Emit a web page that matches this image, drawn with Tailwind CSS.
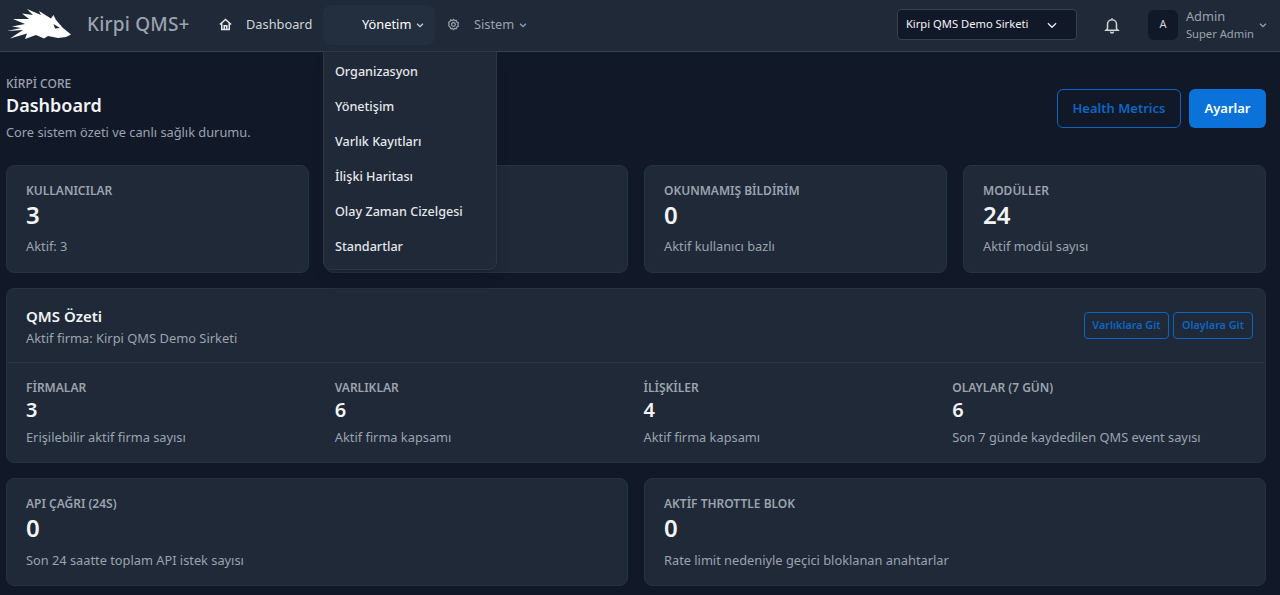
<!DOCTYPE html>
<html lang="tr">
<head>
  <meta charset="UTF-8">
  <meta name="viewport" content="width=device-width, initial-scale=1.0">
  <title>Kirpi QMS+ Dashboard</title>
  <script src="https://cdn.jsdelivr.net/npm/@tailwindcss/browser@4"></script>
</head>
<body class="bg-[#111827] h-[595px] overflow-hidden font-['Noto_Sans',sans-serif] text-[#e5e7eb]">
  <header class="h-[52px] bg-[#1f2937] border-b border-[#374151] flex items-center pl-[6px] pr-[12px]">
    <svg class="w-[66px] h-[32px] shrink-0 mb-[4px]" viewBox="0 0 66 32" fill="#fff">
      <path d="M65 26.500 L57 20 L50 12 L47.500 7 L45 10.500 L33 3 L35 7 L21 1 L27 7 L16 5.500 L23 11 L7 11 L19 16 L6 18.500 L15 20 L1 23 L17 22 L4 30.500 L21 25.500 L19 31 L30 27 L38 30.500 L42 28 L52 30 L60 29 Z"/>
      <path d="M47.500 16 L54 20 L49 20.500 Z" fill="#1f2937"/>
    </svg>
    <span class="ml-[15px] text-[19px] font-medium text-[#9ca3af] tracking-[0.2px] w-[131px] shrink-0 mb-[2px]">Kirpi QMS+</span>
    <nav class="flex items-center text-[12.8px] h-[40px] mb-[2px]">
      <a class="flex items-center text-[#d1d5db] w-[105px]">
        <svg class="w-[15px] h-[15px] mr-[13px]" viewBox="0 0 24 24" fill="none" stroke="#e5e7eb" stroke-width="2.4"><path d="M3 12 12 4l9 8M6 10v10h12V10M10 20v-6h4v6"/></svg>
        Dashboard
      </a>
      <div class="relative">
        <button class="h-[40px] w-[112px] rounded-lg bg-[#232e3e] text-white flex items-center pl-[39px]">
          Yönetim
          <svg class="w-[10px] h-[10px] ml-[4px]" viewBox="0 0 24 24" fill="none" stroke="#d1d5db" stroke-width="3"><path d="m5 9 7 7 7-7"/></svg>
        </button>
        <div class="absolute left-0 top-[46px] z-10 w-[174px] h-[219px] rounded-b-lg bg-[#1f2937] border border-[#2b3647] shadow-lg pt-[3px] pl-[11px] text-[12.6px] font-medium text-[#e5e7eb]">
          <a class="flex items-center h-[35px]">Organizasyon</a>
          <a class="flex items-center h-[35px]">Yönetişim</a>
          <a class="flex items-center h-[35px]">Varlık Kayıtları</a>
          <a class="flex items-center h-[35px]">İlişki Haritası</a>
          <a class="flex items-center h-[35px]">Olay Zaman Cizelgesi</a>
          <a class="flex items-center h-[35px]">Standartlar</a>
        </div>
      </div>
      <a class="flex items-center text-[#9ca3af] ml-[12px]">
        <svg class="w-[13px] h-[13px] mr-[14px]" viewBox="0 0 24 24" fill="none" stroke="#9ca3af" stroke-width="2.2"><circle cx="12" cy="12" r="3.5"/><path d="M12 2.500 14 5l3.200-.6 1 3 2.800 1.600-1 3 1 3-2.800 1.600-1 3-3.200-.6-2 2.500-2-2.500-3.200.6-1-3L3 14l1-3-1-3 2.800-1.600 1-3L10 5z"/></svg>
        Sistem
        <svg class="w-[10px] h-[10px] ml-[4px]" viewBox="0 0 24 24" fill="none" stroke="#9ca3af" stroke-width="3"><path d="m5 9 7 7 7-7"/></svg>
      </a>
    </nav>
    <div class="ml-auto flex items-center mb-[2px]">
      <div class="w-[180px] h-[31px] rounded bg-[#111827] border border-[#374151] flex items-center pl-[8px] text-[11.2px] text-[#f3f4f6]">
        Kirpi QMS Demo Sirketi
        <svg class="w-[14px] h-[14px] ml-[17px]" viewBox="0 0 24 24" fill="none" stroke="#e5e7eb" stroke-width="2.4"><path d="m5 9 7 7 7-7"/></svg>
      </div>
      <svg class="w-[18px] h-[18px] ml-[26px]" viewBox="0 0 24 24" fill="none" stroke="#d1d5db" stroke-width="2"><path d="M6 17V11a6 6 0 0 1 12 0v6l2 2H4zM10 20.500a2 2 0 0 0 4 0M12 3v2"/></svg>
      <div class="w-[30px] h-[30px] ml-[27px] rounded-md bg-[#111827] flex items-center justify-center text-[11px] text-[#d1d5db]">A</div>
      <div class="ml-[8px] mt-[1px] leading-[17px] text-[#9ca3af]">
        <div class="text-[12.8px]">Admin</div>
        <div class="text-[11.2px]">Super Admin</div>
      </div>
      <svg class="w-[10px] h-[10px] ml-[4px]" viewBox="0 0 24 24" fill="none" stroke="#9ca3af" stroke-width="3"><path d="m5 9 7 7 7-7"/></svg>
    </div>
  </header>

  <main class="pl-[6px] pr-[14px]">
    <div class="flex items-start justify-between h-[113px] pt-[24px]">
      <div>
        <p class="text-[12px] font-medium text-[#9ca3af] leading-[16px]">KİRPİ CORE</p>
        <h1 class="text-[18px] font-semibold text-[#f3f4f6] leading-[26px]">Dashboard</h1>
        <p class="text-[12.8px] text-[#9ca3af] leading-[20px] mt-[4px]">Core sistem özeti ve canlı sağlık durumu.</p>
      </div>
      <div class="flex gap-[8px] mt-[13px]">
        <button class="h-[39px] w-[124px] rounded-md border border-[#0b66c3] text-[13px] font-semibold text-[#0b66c3]">Health Metrics</button>
        <button class="h-[39px] w-[77px] rounded-md bg-[#0b72d9] text-[13px] font-semibold text-white">Ayarlar</button>
      </div>
    </div>

    <div class="grid grid-cols-4 gap-[16px]">
      <div class="h-[108px] rounded-lg bg-[#1f2937] border border-[#263142] pl-[19px] pt-[17px]">
        <p class="text-[12px] font-semibold text-[#9ca3af] leading-[16px]">KULLANICILAR</p>
        <p class="text-[24px] font-semibold text-[#f3f4f6] leading-[32px]">3</p>
        <p class="text-[12.8px] text-[#9ca3af] leading-[16px] mt-[7px]">Aktif: 3</p>
      </div>
      <div class="h-[108px] rounded-lg bg-[#1f2937] border border-[#263142]"></div>
      <div class="h-[108px] rounded-lg bg-[#1f2937] border border-[#263142] pl-[19px] pt-[17px]">
        <p class="text-[12px] font-semibold text-[#9ca3af] leading-[16px]">OKUNMAMIŞ BİLDİRİM</p>
        <p class="text-[24px] font-semibold text-[#f3f4f6] leading-[32px]">0</p>
        <p class="text-[12.8px] text-[#9ca3af] leading-[16px] mt-[7px]">Aktif kullanıcı bazlı</p>
      </div>
      <div class="h-[108px] rounded-lg bg-[#1f2937] border border-[#263142] pl-[19px] pt-[17px]">
        <p class="text-[12px] font-semibold text-[#9ca3af] leading-[16px]">MODÜLLER</p>
        <p class="text-[24px] font-semibold text-[#f3f4f6] leading-[32px]">24</p>
        <p class="text-[12.8px] text-[#9ca3af] leading-[16px] mt-[7px]">Aktif modül sayısı</p>
      </div>
    </div>

    <section class="mt-[15px] h-[175px] rounded-lg bg-[#1f2937] border border-[#263142]">
      <div class="h-[74px] border-b border-[#2a3544] flex items-center justify-between pl-[19px] pr-[12px]">
        <div class="mt-[2px]">
          <h2 class="text-[15px] font-semibold text-[#f3f4f6] leading-[20px]">QMS Özeti</h2>
          <p class="text-[12.9px] text-[#9ca3af] leading-[18px] mt-[3px]">Aktif firma: Kirpi QMS Demo Sirketi</p>
        </div>
        <div class="flex gap-[4px]">
          <button class="h-[27px] w-[85px] rounded border border-[#0b66c3] text-[10.8px] font-semibold text-[#0b66c3]">Varlıklara Git</button>
          <button class="h-[27px] w-[80px] rounded border border-[#0b66c3] text-[10.8px] font-semibold text-[#0b66c3]">Olaylara Git</button>
        </div>
      </div>
      <div class="grid grid-cols-4 gap-[16px] pl-[19px] pr-[20px] pt-[17px]">
        <div>
          <p class="text-[12px] font-semibold text-[#9ca3af] leading-[16px]">FİRMALAR</p>
          <p class="text-[20px] font-semibold text-[#f3f4f6] leading-[28px]">3</p>
          <p class="text-[12.8px] text-[#9ca3af] leading-[16px] mt-[5px]">Erişilebilir aktif firma sayısı</p>
        </div>
        <div>
          <p class="text-[12px] font-semibold text-[#9ca3af] leading-[16px]">VARLIKLAR</p>
          <p class="text-[20px] font-semibold text-[#f3f4f6] leading-[28px]">6</p>
          <p class="text-[12.8px] text-[#9ca3af] leading-[16px] mt-[5px]">Aktif firma kapsamı</p>
        </div>
        <div>
          <p class="text-[12px] font-semibold text-[#9ca3af] leading-[16px]">İLİŞKİLER</p>
          <p class="text-[20px] font-semibold text-[#f3f4f6] leading-[28px]">4</p>
          <p class="text-[12.8px] text-[#9ca3af] leading-[16px] mt-[5px]">Aktif firma kapsamı</p>
        </div>
        <div>
          <p class="text-[12px] font-semibold text-[#9ca3af] leading-[16px]">OLAYLAR (7 GÜN)</p>
          <p class="text-[20px] font-semibold text-[#f3f4f6] leading-[28px]">6</p>
          <p class="text-[12.8px] text-[#9ca3af] leading-[16px] mt-[5px]">Son 7 günde kaydedilen QMS event sayısı</p>
        </div>
      </div>
    </section>

    <div class="grid grid-cols-2 gap-[16px] mt-[15px]">
      <div class="h-[108px] rounded-lg bg-[#1f2937] border border-[#263142] pl-[19px] pt-[17px]">
        <p class="text-[12px] font-semibold text-[#9ca3af] leading-[16px]">API ÇAĞRI (24S)</p>
        <p class="text-[24px] font-semibold text-[#f3f4f6] leading-[32px]">0</p>
        <p class="text-[12.8px] text-[#9ca3af] leading-[16px] mt-[8px]">Son 24 saatte toplam API istek sayısı</p>
      </div>
      <div class="h-[108px] rounded-lg bg-[#1f2937] border border-[#263142] pl-[19px] pt-[17px]">
        <p class="text-[12px] font-semibold text-[#9ca3af] leading-[16px]">AKTİF THROTTLE BLOK</p>
        <p class="text-[24px] font-semibold text-[#f3f4f6] leading-[32px]">0</p>
        <p class="text-[12.8px] text-[#9ca3af] leading-[16px] mt-[8px]">Rate limit nedeniyle geçici bloklanan anahtarlar</p>
      </div>
    </div>
  </main>
</body>
</html>
